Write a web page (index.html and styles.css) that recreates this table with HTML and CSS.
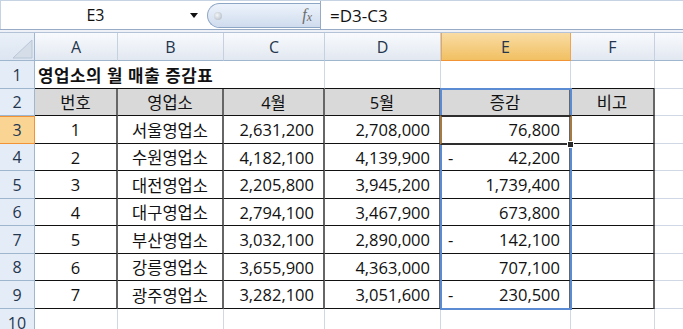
FILE: index.html
```html
<!DOCTYPE html>
<html lang="ko">
<head>
<meta charset="utf-8">
<title>영업소의 월 매출 증감표</title>
<link rel="stylesheet" href="styles.css">
</head>
<body>
<div class="fbar">
  <div class="namebox"><span class="ref">E3</span><span class="dd"></span></div>
  <div class="fxpill"><span class="knob"></span><span class="fx">f<span class="fxx">x</span></span></div>
  <div class="formula">=D3-C3</div>
</div>
<div class="sep"></div>
<div class="sheet">
  <div class="cell corner"><svg class="tri" width="22" height="20" viewBox="0 0 22 20"><polygon points="21,1 21,19 2,19" fill="#d5dde8" stroke="#b9c6d8" stroke-width="1"/></svg></div>
  <div class="cell ch">A</div>
  <div class="cell ch">B</div>
  <div class="cell ch">C</div>
  <div class="cell ch">D</div>
  <div class="cell ch on">E</div>
  <div class="cell ch">F</div>
  <div class="cell ch end"></div>

  <div class="cell rh">1</div>
  <div class="cell title tb">영업소의 월 매출 증감표</div>
  <div class="cell tb"></div>
  <div class="cell tb"></div>
  <div class="cell tb"></div>
  <div class="cell end"></div>

  <div class="cell rh">2</div>
  <div class="cell t hd">번호</div>
  <div class="cell t hd">영업소</div>
  <div class="cell t hd">4월</div>
  <div class="cell t hd">5월</div>
  <div class="cell t hd">증감</div>
  <div class="cell t hd">비고</div>
  <div class="cell end"></div>

  <div class="cell rh on">3</div>
  <div class="cell t c">1</div>
  <div class="cell t c">서울영업소</div>
  <div class="cell t n">2,631,200</div>
  <div class="cell t n">2,708,000</div>
  <div class="cell t n">76,800</div>
  <div class="cell t"></div>
  <div class="cell end"></div>

  <div class="cell rh">4</div>
  <div class="cell t c">2</div>
  <div class="cell t c">수원영업소</div>
  <div class="cell t n">4,182,100</div>
  <div class="cell t n">4,139,900</div>
  <div class="cell t n neg"><span class="minus">-</span><span>42,200</span></div>
  <div class="cell t"></div>
  <div class="cell end"></div>

  <div class="cell rh">5</div>
  <div class="cell t c">3</div>
  <div class="cell t c">대전영업소</div>
  <div class="cell t n">2,205,800</div>
  <div class="cell t n">3,945,200</div>
  <div class="cell t n">1,739,400</div>
  <div class="cell t"></div>
  <div class="cell end"></div>

  <div class="cell rh">6</div>
  <div class="cell t c">4</div>
  <div class="cell t c">대구영업소</div>
  <div class="cell t n">2,794,100</div>
  <div class="cell t n">3,467,900</div>
  <div class="cell t n">673,800</div>
  <div class="cell t"></div>
  <div class="cell end"></div>

  <div class="cell rh">7</div>
  <div class="cell t c">5</div>
  <div class="cell t c">부산영업소</div>
  <div class="cell t n">3,032,100</div>
  <div class="cell t n">2,890,000</div>
  <div class="cell t n neg"><span class="minus">-</span><span>142,100</span></div>
  <div class="cell t"></div>
  <div class="cell end"></div>

  <div class="cell rh">8</div>
  <div class="cell t c">6</div>
  <div class="cell t c">강릉영업소</div>
  <div class="cell t n">3,655,900</div>
  <div class="cell t n">4,363,000</div>
  <div class="cell t n">707,100</div>
  <div class="cell t"></div>
  <div class="cell end"></div>

  <div class="cell rh">9</div>
  <div class="cell t c">7</div>
  <div class="cell t c">광주영업소</div>
  <div class="cell t n">3,282,100</div>
  <div class="cell t n">3,051,600</div>
  <div class="cell t n neg"><span class="minus">-</span><span>230,500</span></div>
  <div class="cell t"></div>
  <div class="cell end"></div>

  <div class="cell rh last">10</div>
  <div class="cell"></div>
  <div class="cell"></div>
  <div class="cell"></div>
  <div class="cell"></div>
  <div class="cell"></div>
  <div class="cell"></div>
  <div class="cell end"></div>

  <div class="selbox"></div>
  <div class="active"></div>
  <div class="handle"></div>
</div>
</body>
</html>
```
FILE: styles.css
```css
html, body {
  margin: 0;
  padding: 0;
}
body {
  width: 683px;
  height: 329px;
  overflow: hidden;
  background: #fff;
  font-family: "Open Sans", "Noto Sans CJK KR", sans-serif;
  color: #111;
}

/* formula bar */
.fbar {
  display: flex;
  height: 30px;
  box-sizing: border-box;
  border-top: 1px solid #c6d3e3;
  border-bottom: 1px solid #98abc6;
}
.namebox {
  width: 205px;
  display: flex;
  align-items: center;
  box-sizing: border-box;
  border-left: 1px solid #c6d3e3;
}
.ref {
  width: 189px;
  text-align: center;
  font-size: 16px;
  line-height: 20px;
}
.dd {
  width: 0;
  height: 0;
  border-left: 4px solid transparent;
  border-right: 4px solid transparent;
  border-top: 5px solid #111;
}
.fxpill {
  margin: 2px 0 1px 2px;
  width: 113px;
  box-sizing: border-box;
  border: 1px solid #8ea6c6;
  border-right: none;
  border-radius: 13px 0 0 13px;
  background: linear-gradient(#edf3fb, #cfdcee);
  display: flex;
  align-items: center;
  justify-content: space-between;
  padding: 0 8px 0 6px;
}
.knob {
  width: 8px;
  height: 8px;
  border-radius: 50%;
  background: radial-gradient(circle at 40% 40%, #f4f6f8, #a9b3bf);
}
.fx {
  font-family: "Liberation Serif", serif;
  font-style: italic;
  font-size: 16px;
  color: #6c6c6c;
  line-height: 16px;
}
.fxx {
  font-size: 12px;
  position: relative;
  top: 1px;
}
.formula {
  flex: 1;
  border-left: 1px solid #98abc6;
  padding-left: 9px;
  display: flex;
  align-items: center;
  font-size: 17px;
}
.sep {
  height: 2px;
  background: #eef2f8;
  border-bottom: 1px solid #b3c2d6;
}

/* sheet */
.sheet {
  position: relative;
  display: grid;
  grid-template-columns: 35px 83px 106px 101px 116px 130px 84px 28px;
  grid-template-rows: 28px 28px 27px 28px 27px 28px 27px 28px 27px 28px 27px;
}
.cell {
  box-sizing: border-box;
  border-right: 1px solid #d0d7e5;
  border-bottom: 1px solid #d0d7e5;
  display: flex;
  align-items: center;
  font-size: 16.5px;
  white-space: nowrap;
  min-width: 0;
}
.cell.end {
  border-right: none;
}
.corner {
  background: linear-gradient(#eaf0f8, #dce5f1);
  border-right: 1px solid #9eb6ce;
  border-bottom: 1px solid #9eb6ce;
  align-items: flex-end;
  justify-content: flex-end;
}
.tri {
  display: block;
  margin: 0 1px 1px 0;
}
.ch {
  background: linear-gradient(#f8fafd, #e2e8f1);
  border-right: 1px solid #c5d1e1;
  border-bottom: 1px solid #9eb6ce;
  justify-content: center;
  font-size: 16px;
  color: #24364e;
}
.ch.on {
  background: linear-gradient(#f9dca4, #f1c062);
  border-right: 1px solid #eea54d;
  border-bottom: 1px solid #f29436;
  box-shadow: inset 1px 0 0 #eea54d;
}
.ch.end {
  border-right: none;
}
.rh {
  background: #e4ecf7;
  border-right: 1px solid #9eb6ce;
  border-bottom: 1px solid #9eb6ce;
  justify-content: center;
  font-size: 16px;
  color: #24364e;
}
.rh.last {
  align-items: flex-start;
  padding-top: 3px;
}
.rh.on {
  background: #f9d493;
  border-bottom: 1px solid #f29436;
  border-right: 1px solid #f29436;
  box-shadow: inset 0 1px 0 #f29436;
}
.title {
  grid-column: span 3;
  font-weight: bold;
  font-size: 16.8px;
  padding-left: 3px;
  letter-spacing: 0.6px;
  overflow: visible;
}
.tb {
  border-bottom: 1px solid #111;
}
.t {
  border-right: 2px solid #666;
  border-bottom: 1px solid #111;
}
.hd {
  background: #d9d9d9;
  justify-content: center;
}
.c {
  justify-content: center;
}
.n {
  justify-content: flex-end;
  padding-right: 9px;
}
.neg {
  justify-content: space-between;
  padding-left: 7px;
}

/* selection overlays */
.selbox {
  position: absolute;
  left: 440px;
  top: 55px;
  width: 132px;
  height: 222px;
  box-sizing: border-box;
  border: 2px solid #5a8bd3;
  pointer-events: none;
}
.active {
  position: absolute;
  left: 440px;
  top: 82px;
  width: 132px;
  height: 30px;
  box-sizing: border-box;
  border: 2px solid #2e2e2e;
  border-left-color: #a57b45;
  border-right-color: #a57b45;
}
.handle {
  position: absolute;
  left: 567px;
  top: 108px;
  width: 5px;
  height: 5px;
  background: #2a2a2a;
  border: 1px solid #fff;
}
```
